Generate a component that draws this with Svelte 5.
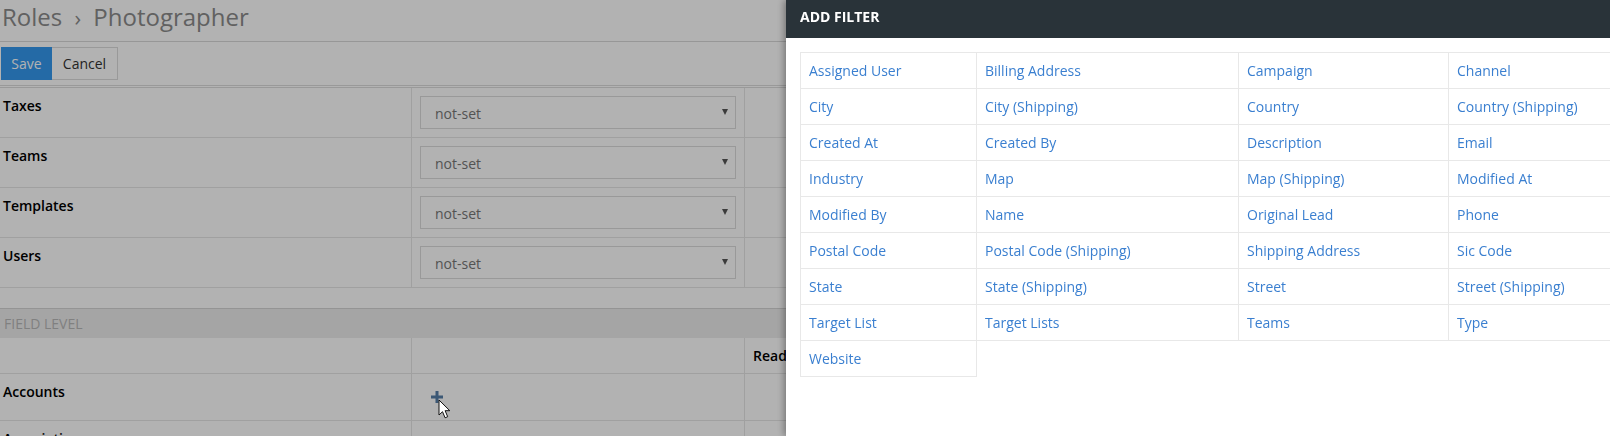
<script>
  const acl = ["Taxes", "Teams", "Templates", "Users"];
  const filters = [
    "Assigned User", "Billing Address", "Campaign", "Channel",
    "City", "City (Shipping)", "Country", "Country (Shipping)",
    "Created At", "Created By", "Description", "Email",
    "Industry", "Map", "Map (Shipping)", "Modified At",
    "Modified By", "Name", "Original Lead", "Phone",
    "Postal Code", "Postal Code (Shipping)", "Shipping Address", "Sic Code",
    "State", "State (Shipping)", "Street", "Street (Shipping)",
    "Target List", "Target Lists", "Teams", "Type",
    "Website",
  ];
</script>

<div class="page">
  <h3 class="title">Roles <span class="sep">›</span> Photographer</h3>
  <div class="buttons">
    <button class="save">Save</button>
    <button class="cancel">Cancel</button>
  </div>

  <table class="scopes">
    <tbody>
      {#each acl as name}
        <tr>
          <td class="name"><b>{name}</b></td>
          <td class="level">
            <div class="select">not-set<i class="caret"></i></div>
          </td>
          <td></td>
        </tr>
      {/each}
    </tbody>
  </table>

  <div class="section">FIELD LEVEL</div>

  <table class="fields">
    <tbody>
      <tr class="head">
        <td class="name"></td>
        <td class="level"></td>
        <td class="read"><b>Read</b></td>
      </tr>
      <tr class="account">
        <td class="name"><b>Accounts</b></td>
        <td class="level">
          <svg class="plus" width="12" height="12" viewBox="0 0 12 12">
            <path d="M4.5 0h3v4.5H12v3H7.5V12h-3V7.5H0v-3h4.5z" />
          </svg>
        </td>
        <td></td>
      </tr>
      <tr class="account">
        <td class="name"><b>Associations</b></td>
        <td class="level"></td>
        <td></td>
      </tr>
    </tbody>
  </table>
</div>

<div class="backdrop"></div>

<svg class="cursor" width="14" height="20" viewBox="0 0 14 20">
  <path d="M1 1v15l3.5-3.3 2.6 6.1 2.6-1.1-2.6-6h4.7z" fill="#fff" stroke="#111" stroke-width="1" />
</svg>

<aside class="modal">
  <header>ADD FILTER</header>
  <div class="body">
    <div class="grid">
      {#each filters as filter}
        <a href="#top">{filter}</a>
      {/each}
    </div>
  </div>
</aside>

<style>
  :global(body) {
    margin: 0;
    overflow: hidden;
    background: #fff;
  }

  .page {
    height: 436px;
    overflow: hidden;
    font-family: "Open Sans", sans-serif;
    font-size: 14px;
    color: #333;
  }

  .title {
    margin: 0;
    padding: 0 2px;
    height: 41px;
    border-bottom: 1px solid #d8d8d8;
    font-size: 24px;
    font-weight: 400;
    line-height: 33px;
    color: #8c8c8c;
  }

  .sep {
    margin: 0 6px;
    font-size: 22px;
  }

  .buttons {
    display: flex;
    padding: 5px 1px;
    height: 33px;
    border-bottom: 3px double #dcdcdc;
  }

  button {
    font: inherit;
    height: 33px;
    padding: 0;
    margin: 0;
    box-sizing: border-box;
  }

  .save {
    width: 51px;
    background: #3498ee;
    border: 1px solid #3498ee;
    color: #fff;
  }

  .cancel {
    width: 66px;
    background: #fff;
    border: 1px solid #dcdcdc;
    border-left: 0;
    color: #333;
  }

  table {
    width: 100%;
    border-collapse: separate;
    border-spacing: 0;
    table-layout: fixed;
  }

  td {
    padding: 8px 3px 0;
    box-sizing: border-box;
    vertical-align: top;
    line-height: 20px;
    border-bottom: 1px solid #e6e6e6;
    border-left: 1px solid #e6e6e6;
  }

  td:first-child {
    border-left: 0;
  }

  .name {
    width: 411px;
  }

  .level {
    width: 333px;
  }

  b {
    font-weight: 600;
    color: #000;
  }

  .scopes {
    margin-bottom: 20px;
  }

  .scopes td {
    height: 50px;
  }

  .scopes .level {
    padding: 8px 8px 0;
  }

  .select {
    position: relative;
    height: 33px;
    box-sizing: border-box;
    border: 1px solid #dcdcdc;
    padding: 6px 14px;
    color: #777;
    line-height: 21px;
  }

  .caret {
    position: absolute;
    right: 7px;
    top: 12px;
    width: 0;
    height: 0;
    border-left: 3px solid transparent;
    border-right: 3px solid transparent;
    border-top: 6px solid #555;
  }

  .section {
    height: 30px;
    border-top: 1px solid #d4d4d4;
    box-sizing: border-box;
    background: #ededed;
    padding-left: 4px;
    line-height: 30px;
    color: #b8b8b8;
  }

  .fields .head td {
    height: 36px;
  }

  .fields .read {
    padding-left: 8px;
  }

  .fields .account td {
    height: 47px;
  }

  .plus {
    display: block;
    margin: 9px 0 0 16px;
    fill: #567fa8;
  }

  .backdrop {
    position: fixed;
    inset: 0;
    background: rgba(0, 0, 0, 0.3);
  }

  .cursor {
    position: fixed;
    left: 438px;
    top: 399px;
  }

  .modal {
    position: fixed;
    top: 0;
    left: 786px;
    right: 0;
    bottom: 0;
    overflow: hidden;
    background: #fff;
    box-shadow: -2px 0 7px rgba(0, 0, 0, 0.35);
    font-family: "Open Sans", sans-serif;
    font-size: 14px;
  }

  header {
    height: 38px;
    box-sizing: border-box;
    padding-left: 14px;
    background: #293339;
    color: #fff;
    font-weight: 700;
    font-size: 14px;
    line-height: 33px;
  }

  .body {
    padding: 14px;
  }

  .grid {
    display: grid;
    grid-template-columns: 176px 262px 210px 210px;
    width: 858px;
    border-top: 1px solid #e8e8e8;
    border-left: 1px solid #e8e8e8;
  }

  a {
    display: block;
    height: 36px;
    box-sizing: border-box;
    padding: 0 8px;
    border-right: 1px solid #e8e8e8;
    border-bottom: 1px solid #e8e8e8;
    line-height: 36px;
    color: #3a7fd0;
    text-decoration: none;
    white-space: nowrap;
  }
</style>
